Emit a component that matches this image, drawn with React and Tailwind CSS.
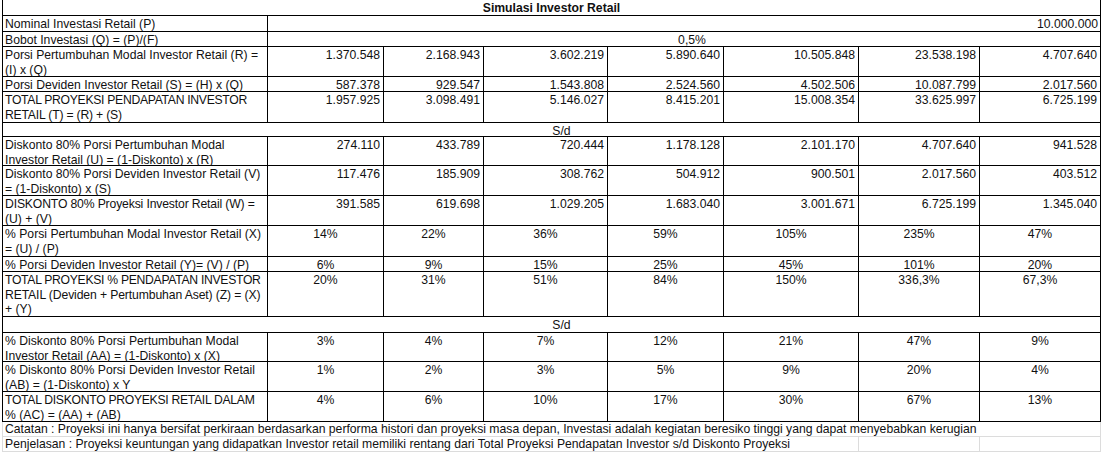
const cols = "grid grid-cols-[264px_115px_99px_123px_115px_134px_120px_120px]";

// each label line: [text, extra classes]
const rows = [
  {
    h: "h-[29px]",
    label: [["Porsi Pertumbuhan Modal Investor Retail (R) ="], ["(I) x (Q)"]],
    type: "num",
    values: ["1.370.548", "2.168.943", "3.602.219", "5.890.640", "10.505.848", "23.538.198", "4.707.640"],
  },
  {
    h: "h-[14px]",
    label: [["Porsi Deviden Investor Retail (S) = (H) x (Q)"]],
    type: "num",
    values: ["587.378", "929.547", "1.543.808", "2.524.560", "4.502.506", "10.087.799", "2.017.560"],
  },
  {
    h: "h-[30px]",
    label: [["TOTAL PROYEKSI PENDAPATAN INVESTOR", "tracking-[-0.3px]"], ["RETAIL (T) = (R) + (S)", "tracking-[-0.2px]"]],
    type: "num",
    values: ["1.957.925", "3.098.491", "5.146.027", "8.415.201", "15.008.354", "33.625.997", "6.725.199"],
  },
  { sd: true, h: "h-[13px]" },
  {
    h: "h-[28px]",
    label: [["Diskonto 80% Porsi Pertumbuhan Modal"], ["Investor Retail (U) = (1-Diskonto) x (R)"]],
    type: "num",
    values: ["274.110", "433.789", "720.444", "1.178.128", "2.101.170", "4.707.640", "941.528"],
  },
  {
    h: "h-[29px]",
    label: [["Diskonto 80% Porsi Deviden Investor Retail (V)"], ["= (1-Diskonto) x (S)"]],
    type: "num",
    values: ["117.476", "185.909", "308.762", "504.912", "900.501", "2.017.560", "403.512"],
  },
  {
    h: "h-[29px]",
    label: [["DISKONTO 80% Proyeksi Investor Retail (W) =", "tracking-[-0.15px]"], ["(U) + (V)"]],
    type: "num",
    values: ["391.585", "619.698", "1.029.205", "1.683.040", "3.001.671", "6.725.199", "1.345.040"],
  },
  {
    h: "h-[30px]",
    label: [["% Porsi Pertumbuhan Modal Investor Retail (X)"], ["= (U) / (P)"]],
    type: "pct",
    values: ["14%", "22%", "36%", "59%", "105%", "235%", "47%"],
  },
  {
    h: "h-[14px]",
    label: [["% Porsi Deviden Investor Retail (Y)= (V) / (P)"]],
    type: "pct",
    values: ["6%", "9%", "15%", "25%", "45%", "101%", "20%"],
  },
  {
    h: "h-[44px]",
    label: [
      ["TOTAL PROYEKSI % PENDAPATAN INVESTOR", "tracking-[-0.3px]"],
      ["RETAIL (Deviden + Pertumbuhan Aset) (Z) = (X)", "tracking-[-0.12px]"],
      ["+ (Y)"],
    ],
    type: "pct",
    values: ["20%", "31%", "51%", "84%", "150%", "336,3%", "67,3%"],
  },
  { sd: true, h: "h-[15px]" },
  {
    h: "h-[28px]",
    label: [["% Diskonto 80% Porsi Pertumbuhan Modal"], ["Investor Retail (AA) = (1-Diskonto) x (X)"]],
    type: "pct",
    values: ["3%", "4%", "7%", "12%", "21%", "47%", "9%"],
  },
  {
    h: "h-[29px]",
    label: [["% Diskonto 80% Porsi Deviden Investor Retail"], ["(AB) = (1-Diskonto) x Y"]],
    type: "pct",
    values: ["1%", "2%", "3%", "5%", "9%", "20%", "4%"],
  },
  {
    h: "h-[29px]",
    label: [["TOTAL DISKONTO PROYEKSI RETAIL DALAM", "tracking-[-0.3px]"], ["% (AC) = (AA) + (AB)"]],
    type: "pct",
    values: ["4%", "6%", "10%", "17%", "30%", "67%", "13%"],
  },
];

function Cell({ className = "", children }) {
  return <div className={"bg-white whitespace-nowrap " + className}>{children}</div>;
}

export default function App() {
  return (
    <div className="min-h-screen w-[1105px] bg-white text-[12.2px] leading-[15px] text-[#111] font-['Liberation_Sans',Arial,sans-serif]">
      <div className={cols + " ml-[2px] w-[1099px] gap-px bg-black px-px pb-px"}>
        <Cell className="col-span-8 h-[15px] pt-px text-center font-bold">Simulasi Investor Retail</Cell>

        <Cell className="h-[15px] pt-px pl-[2px]">Nominal Investasi Retail (P)</Cell>
        <Cell className="col-span-7 h-[15px] pt-px pr-[2px] text-right">10.000.000</Cell>

        <Cell className="h-[14px] pt-px pl-[2px]">Bobot Investasi (Q) = (P)/(F)</Cell>
        <Cell className="col-span-7 h-[14px] pt-px pl-[16px] text-center">0,5%</Cell>

        {rows.map((row, i) =>
          row.sd ? (
            <Cell key={i} className={"col-span-8 pt-px pl-[20px] text-center " + row.h}>
              S/d
            </Cell>
          ) : (
            [
              <Cell key={i + "-l"} className={"pt-px pl-[2px] leading-[14.5px] " + row.h}>
                {row.label.map(([line, cls], j) => (
                  <div key={j} className={cls || ""}>
                    {line}
                  </div>
                ))}
              </Cell>,
              ...row.values.map((v, j) => (
                <Cell
                  key={i + "-" + j}
                  className={(row.type === "num" ? "pt-px pr-[3px] text-right " : "pt-px text-center ") + row.h}
                >
                  {v}
                </Cell>
              )),
            ]
          )
        )}
      </div>

      <div className={cols + " ml-[2px] w-[1099px] gap-px bg-[#dcdcdc] px-px pb-px"}>
        <Cell className="col-span-8 h-[14px] pl-[2px]">
          Catatan : Proyeksi ini hanya bersifat perkiraan berdasarkan performa histori dan proyeksi masa depan, Investasi adalah kegiatan beresiko tinggi yang dapat menyebabkan kerugian
        </Cell>
        <Cell className="col-span-6 h-[14px] pl-[2px]">
          Penjelasan : Proyeksi keuntungan yang didapatkan Investor retail memiliki rentang dari Total Proyeksi Pendapatan Investor s/d Diskonto Proyeksi
        </Cell>
        <Cell className="h-[14px]" />
        <Cell className="h-[14px]" />
      </div>
    </div>
  );
}
